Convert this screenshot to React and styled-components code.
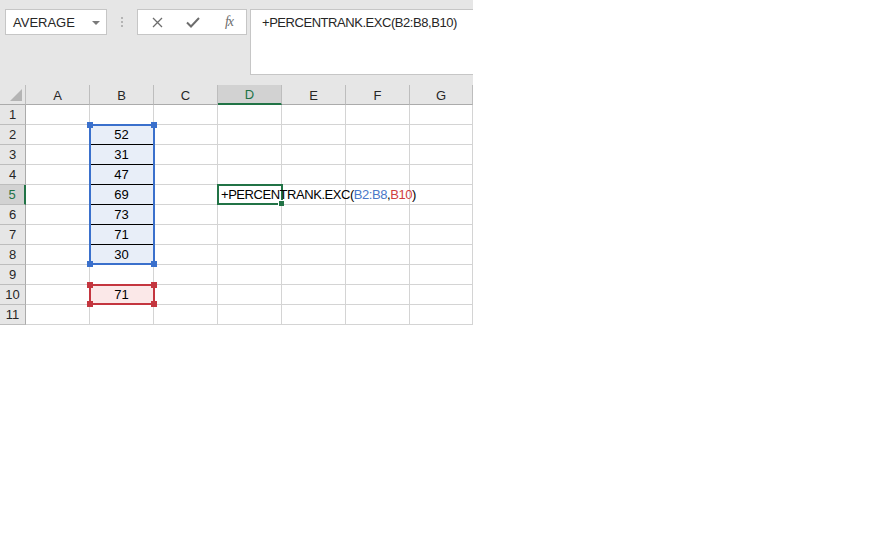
import React from "react";
import styled, { createGlobalStyle } from "styled-components";

const GlobalStyle = createGlobalStyle`
  html, body {
    margin: 0;
    padding: 0;
    background: #ffffff;
  }
  body {
    font-family: "Liberation Sans", Arial, sans-serif;
  }
`;

const Sheet = styled.div`
  width: 473px;
  display: flex;
  flex-direction: column;
`;

// ==== formula bar ====

const Toolbar = styled.div`
  height: 85px;
  background: #e6e6e6;
  display: flex;
  align-items: flex-start;
  padding: 9px 0 0 5px;
  box-sizing: border-box;
`;

const NameBox = styled.div`
  width: 102px;
  height: 26px;
  box-sizing: border-box;
  background: #ffffff;
  border: 1px solid #c6c6c6;
  display: flex;
  align-items: center;
  justify-content: space-between;
  padding: 0 6px 0 7px;
  font-size: 13px;
  color: #262626;
`;

const Caret = styled.span`
  width: 0;
  height: 0;
  border-left: 4px solid transparent;
  border-right: 4px solid transparent;
  border-top: 4px solid #7a7a7a;
  margin-top: 1px;
`;

const Grip = styled.div`
  width: 30px;
  height: 26px;
  display: flex;
  flex-direction: column;
  align-items: center;
  justify-content: center;
  gap: 2px;

  span {
    width: 2px;
    height: 2px;
    background: #b4b4b4;
  }
`;

const ButtonBox = styled.div`
  width: 110px;
  height: 26px;
  box-sizing: border-box;
  background: #ffffff;
  border: 1px solid #c6c6c6;
  display: grid;
  grid-template-columns: 36px 36px 36px;
  align-items: center;
  justify-items: center;
  padding-left: 1px;
`;

const Fx = styled.span`
  font-family: "Liberation Serif", "Times New Roman", serif;
  font-style: italic;
  font-size: 14px;
  color: #6d6d6d;
  letter-spacing: -1px;
`;

const FormulaBox = styled.div`
  margin-left: 3px;
  flex: 1;
  height: 66px;
  box-sizing: border-box;
  background: #ffffff;
  border: 1px solid #c6c6c6;
  border-right: none;
  padding: 5px 0 0 11px;
  font-size: 13px;
  letter-spacing: -0.45px;
  color: #262626;
  line-height: 16px;
`;

// ==== grid ====

const Grid = styled.div`
  position: relative;
  display: grid;
  grid-template-columns: 26px repeat(6, 64px) 63px;
  grid-auto-rows: 20px;
  font-size: 13px;
  color: #000000;
`;

const Corner = styled.div`
  background: #e6e6e6;
  border-right: 1px solid #bdbdbd;
  border-bottom: 1px solid #ababab;
  box-sizing: border-box;
  display: flex;
  align-items: flex-end;
  justify-content: flex-end;
  padding: 0 3px 3px 0;

  span {
    width: 0;
    height: 0;
    border-left: 12px solid transparent;
    border-bottom: 12px solid #b4b4b4;
  }
`;

const ColHead = styled.div`
  background: ${(p) => (p.active ? "#d2d2d2" : "#e6e6e6")};
  color: ${(p) => (p.active ? "#217346" : "#262626")};
  border-right: 1px solid #bdbdbd;
  border-bottom: ${(p) => (p.active ? "2px solid #217346" : "1px solid #ababab")};
  box-sizing: border-box;
  display: flex;
  align-items: center;
  justify-content: center;
  padding-top: 1px;
`;

const RowHead = styled.div`
  background: ${(p) => (p.active ? "#d2d2d2" : "#e6e6e6")};
  color: ${(p) => (p.active ? "#217346" : "#262626")};
  border-right: ${(p) => (p.active ? "2px solid #217346" : "1px solid #ababab")};
  border-bottom: 1px solid #bdbdbd;
  box-sizing: border-box;
  display: flex;
  align-items: center;
  justify-content: center;
`;

const Cell = styled.div`
  position: relative;
  background: ${(p) => p.fill || "#ffffff"};
  border-right: 1px solid #d4d4d4;
  border-bottom: 1px solid ${(p) => (p.rule ? "#000000" : "#d4d4d4")};
  box-sizing: border-box;
  display: flex;
  align-items: center;
  justify-content: center;
  white-space: nowrap;
`;

const Overflow = styled.span`
  position: absolute;
  left: 3px;
  top: 2px;
  z-index: 3;
  white-space: nowrap;
  letter-spacing: -0.45px;
`;

const Ref = styled.span`
  color: ${(p) => p.color};
`;

const Range = styled.div`
  position: absolute;
  left: ${(p) => p.x}px;
  top: ${(p) => p.y}px;
  width: ${(p) => p.w}px;
  height: ${(p) => p.h}px;
  box-sizing: border-box;
  border: 2px solid ${(p) => p.color};
  pointer-events: none;
  z-index: 2;
`;

const Handle = styled.span`
  position: absolute;
  width: 6px;
  height: 6px;
  background: ${(p) => p.color};
  ${(p) => (p.top ? "top: -4px;" : "bottom: -4px;")}
  ${(p) => (p.left ? "left: -4px;" : "right: -4px;")}
`;

const FillHandle = styled.span`
  position: absolute;
  right: -3px;
  bottom: -3px;
  width: 5px;
  height: 5px;
  background: #217346;
  border-left: 1px solid #ffffff;
  border-top: 1px solid #ffffff;
`;

const BLUE = "#3a70cc";
const RED = "#c4363f";
const cols = ["A", "B", "C", "D", "E", "F", "G"];
const values = { 2: "52", 3: "31", 4: "47", 5: "69", 6: "73", 7: "71", 8: "30", 10: "71" };

const Formula = () => (
  <>
    +PERCENTRANK.EXC(<Ref color="#4a78c8">B2:B8</Ref>,<Ref color="#cf3f3f">B10</Ref>)
  </>
);

const App = () => {
  const rows = Array.from({ length: 11 }, (_, i) => i + 1);

  return (
    <>
      <GlobalStyle />
      <Sheet>
        <Toolbar>
          <NameBox>
            AVERAGE
            <Caret />
          </NameBox>
          <Grip>
            <span />
            <span />
            <span />
          </Grip>
          <ButtonBox>
            <svg width="11" height="11" viewBox="0 0 11 11">
              <path d="M1 1 L10 10 M10 1 L1 10" stroke="#6d6d6d" strokeWidth="1.3" fill="none" />
            </svg>
            <svg width="14" height="11" viewBox="0 0 14 11">
              <path d="M1 5.5 L5 9.5 L13 1" stroke="#6d6d6d" strokeWidth="2" fill="none" />
            </svg>
            <Fx>fx</Fx>
          </ButtonBox>
          <FormulaBox>+PERCENTRANK.EXC(B2:B8,B10)</FormulaBox>
        </Toolbar>

        <Grid>
          <Corner>
            <span />
          </Corner>
          {cols.map((c) => (
            <ColHead key={c} active={c === "D"}>
              {c}
            </ColHead>
          ))}
          {rows.map((r) => (
            <React.Fragment key={r}>
              <RowHead active={r === 5}>{r}</RowHead>
              {cols.map((c) => {
                const inBlue = c === "B" && r >= 2 && r <= 8;
                const isRed = c === "B" && r === 10;
                return (
                  <Cell
                    key={c + r}
                    fill={inBlue ? "#e8eef8" : isRed ? "#fbe8e8" : undefined}
                    rule={inBlue && r < 8}
                  >
                    {c === "B" && values[r]}
                    {c === "D" && r === 5 && (
                      <Overflow>
                        <Formula />
                      </Overflow>
                    )}
                  </Cell>
                );
              })}
            </React.Fragment>
          ))}

          <Range x={89} y={39} w={66} h={141} color={BLUE}>
            <Handle top left color={BLUE} />
            <Handle top color={BLUE} />
            <Handle left color={BLUE} />
            <Handle color={BLUE} />
          </Range>
          <Range x={89} y={199} w={66} h={21} color={RED}>
            <Handle top left color={RED} />
            <Handle top color={RED} />
            <Handle left color={RED} />
            <Handle color={RED} />
          </Range>
          <Range x={217} y={99} w={66} h={21} color="#217346">
            <FillHandle />
          </Range>
        </Grid>
      </Sheet>
    </>
  );
};

export default App;
